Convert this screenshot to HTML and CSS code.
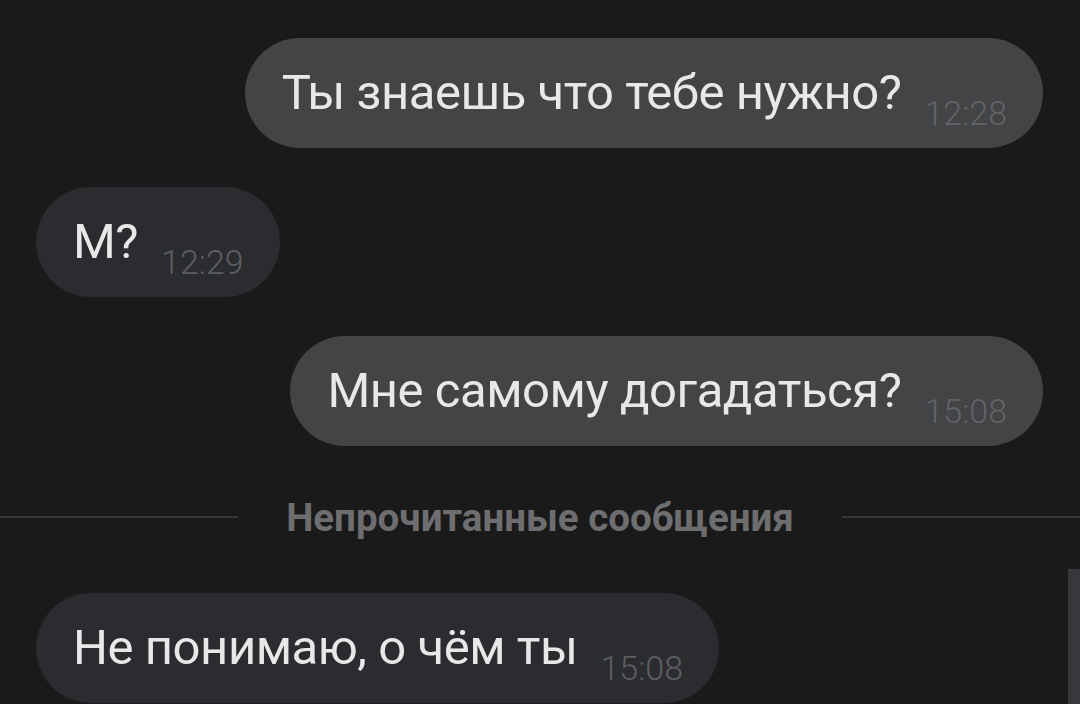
FILE: index.html
```html
<!DOCTYPE html>
<html lang="ru">
<head>
    <meta charset="UTF-8">
    <meta name="viewport" content="width=device-width, initial-scale=1.0">
    <title>Чат</title>
    <link rel="stylesheet" href="styles.css">
</head>
<body>
    <div class="chat">
        <div class="row out">
            <div class="bubble">
                <span class="text">Ты знаешь что тебе нужно?</span>
                <span class="time">12:28</span>
            </div>
        </div>
        <div class="row in">
            <div class="bubble">
                <span class="text">М?</span>
                <span class="time">12:29</span>
            </div>
        </div>
        <div class="row out">
            <div class="bubble">
                <span class="text">Мне самому догадаться?</span>
                <span class="time">15:08</span>
            </div>
        </div>

        <div class="divider">
            <div class="line"></div>
            <span class="divider-text">Непрочитанные сообщения</span>
            <div class="line"></div>
        </div>

        <div class="row in">
            <div class="bubble">
                <span class="text">Не понимаю, о чём ты</span>
                <span class="time">15:08</span>
            </div>
        </div>
    </div>
    <div class="scrollbar"></div>
</body>
</html>
```

FILE: styles.css
```css
body {
    margin: 0;
    padding: 0;
    background-color: #1a1a1b;
    font-family: Roboto, "Noto Sans", sans-serif;
    overflow: hidden;
    height: 704px;
}
.chat {
    display: flex;
    flex-direction: column;
    padding: 38px 37px 0 36px;
    gap: 39px;
}
.row {
    display: flex;
}
.row.out {
    justify-content: flex-end;
}
.row.in {
    justify-content: flex-start;
}
.bubble {
    display: flex;
    align-items: flex-start;
    box-sizing: border-box;
    height: 110px;
    padding: 27px 36px 0 37px;
    border-radius: 55px;
    background-color: #2b2c2f;
}
.out .bubble {
    background-color: #434446;
}
.text {
    font-size: 49px;
    letter-spacing: -0.45px;
    line-height: 56px;
    color: #e8e8e9;
}
.time {
    margin-top: 32px;
    margin-left: 23px;
    font-size: 34px;
    font-weight: 300;
    line-height: 32px;
    color: #5d5e61;
}
.out .time {
    color: #626366;
}
.divider {
    display: flex;
    align-items: center;
    height: 40px;
    margin: 12px -37px 17px -36px;
}
.line {
    flex: 1;
    height: 2px;
    background-color: #38383a;
}
.divider-text {
    margin: 0 48px;
    font-size: 38.5px;
    font-weight: 700;
    color: #6e6e70;
}
.scrollbar {
    position: absolute;
    right: 0;
    top: 569px;
    width: 12px;
    height: 135px;
    background-color: #38383c;
}
```
